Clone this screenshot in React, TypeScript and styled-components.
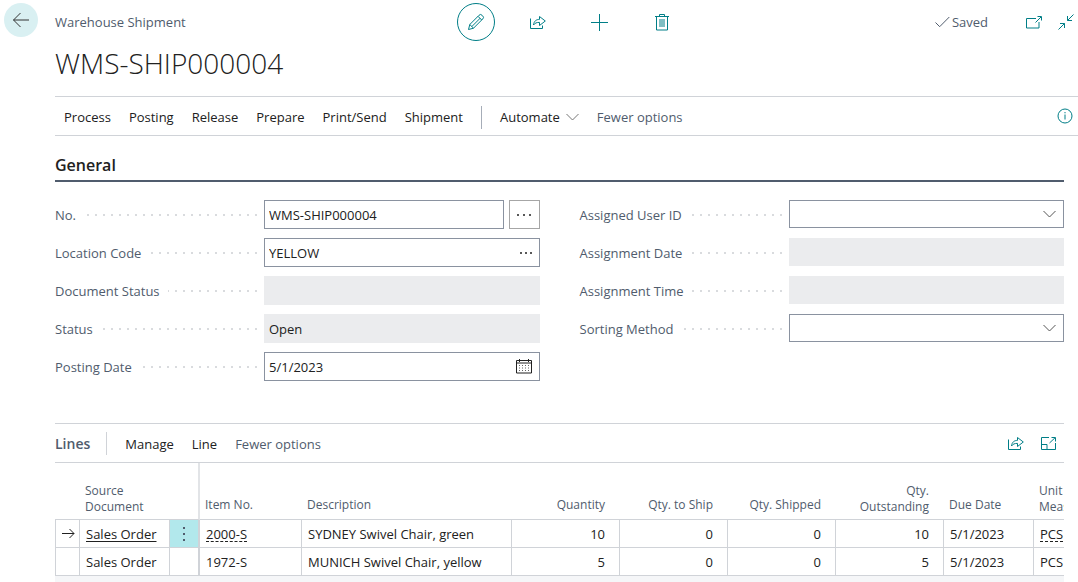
import React, { useState } from 'react';
import styled, { createGlobalStyle, css } from 'styled-components';

const teal = '#007e87';
const ink = '#212121';
const slate = '#505c6d';
const rule = '#d0d3d8';
const fieldBorder = '#8a92a0';

const GlobalStyle = createGlobalStyle`
  *, *::before, *::after { box-sizing: border-box; }
  html, body { margin: 0; background: #fff; }
  body, button, input, select {
    font-family: 'Segoe UI', 'Open Sans', 'Noto Sans', sans-serif;
    font-size: 13px;
    line-height: 20px;
    color: ${ink};
  }
  svg { display: block; fill: none; stroke: currentColor; }
`;

const Page = styled.div`
  overflow: hidden;
`;

const TopBar = styled.header`
  display: grid;
  grid-template-columns: 55px 1fr auto 1fr;
  align-items: center;
  height: 44px;
`;

const BareButton = styled.button`
  display: inline-flex;
  align-items: center;
  justify-content: center;
  padding: 0;
  border: 0;
  background: none;
  cursor: pointer;
`;

const BackButton = styled(BareButton)`
  align-self: start;
  width: 34px;
  height: 34px;
  margin: 3px 0 0 4px;
  border-radius: 50%;
  background: #d9f0f2;
  color: #333;
`;

const PageType = styled.span`
  color: ${slate};
`;

const ActionGroup = styled.div`
  display: flex;
  gap: 24px;
  padding-left: 4px;
`;

const RoundButton = styled(BareButton)<{ $active?: boolean }>`
  width: 38px;
  height: 38px;
  border: 1px solid ${p => (p.$active ? teal : 'transparent')};
  border-radius: 50%;
  color: ${teal};
`;

const StatusGroup = styled.div`
  display: flex;
  justify-content: flex-end;
  align-items: center;
  gap: 16px;
  padding-right: 4px;
`;

const Saved = styled.span`
  display: flex;
  align-items: center;
  gap: 2px;
  margin-right: 22px;
  color: ${slate};
`;

const IconButton = styled(BareButton)`
  color: ${teal};
`;

const Body = styled.main`
  padding-left: 55px;
`;

const Title = styled.h1`
  margin: 0;
  padding-bottom: 14px;
  font-size: 28px;
  line-height: 38px;
  font-weight: 300;
`;

const Menu = styled.nav`
  display: flex;
  align-items: center;
  height: 40px;
  padding: 0 5px 0 9px;
  border-top: 1px solid ${rule};
  border-bottom: 1px solid ${rule};
`;

const MenuItems = styled.div`
  display: flex;
  flex: 1;
  align-items: center;
  gap: 18px;
  padding-top: 2px;
`;

const MenuButton = styled(BareButton)<{ $muted?: boolean }>`
  gap: 6px;
  white-space: nowrap;
  color: ${p => (p.$muted ? slate : ink)};

  & > svg { color: #777; }
`;

const Divider = styled.span`
  width: 1px;
  height: 23px;
  background: #a6adb8;
`;

const Content = styled.div`
  padding-right: 14px;
`;

const SectionTitle = styled.h2`
  margin: 0;
  padding: 17px 0 3px;
  border-bottom: 2px solid ${slate};
  font-size: 16px;
  line-height: 24px;
  font-weight: 600;
`;

const Fields = styled.div`
  display: grid;
  grid-template-columns: 1fr 1fr;
  gap: 40px;
  padding: 18px 0 42px;
`;

const FieldRow = styled.div`
  display: flex;
  align-items: flex-start;
`;

const Column = styled.div<{ $controlHeight: number }>`
  display: grid;
  align-content: start;
  row-gap: 9px;

  ${FieldRow} > :not(label) { height: ${p => p.$controlHeight}px; }
`;

const Caption = styled.label`
  display: flex;
  flex: 0 0 209px;
  align-items: center;
  gap: 8px;
  height: 29px;
  padding-right: 7px;
  color: ${slate};
  white-space: nowrap;

  &::after {
    content: '';
    flex: 1;
    height: 2px;
    background: repeating-linear-gradient(to left, #d9dbde 0 2px, transparent 2px 8px);
  }
`;

const Box = styled.div<{ $disabled?: boolean }>`
  display: flex;
  flex: 1;
  align-items: center;
  min-width: 0;
  padding-right: 7px;
  border: 1px solid ${p => (p.$disabled ? '#ebecee' : fieldBorder)};
  background: ${p => (p.$disabled ? '#ebecee' : '#fff')};
`;

const bareControl = css`
  flex: 1;
  min-width: 0;
  height: 100%;
  padding: 0 4px;
  border: 0;
  outline: 0;
  background: none;
`;

const TextInput = styled.input`
  ${bareControl}
`;

const SelectBox = styled.div`
  display: grid;
  flex: 1;
  align-items: center;
  border: 1px solid ${fieldBorder};
  color: #555;

  & > * { grid-area: 1 / 1; }
  & > svg { justify-self: end; margin-right: 7px; pointer-events: none; }
`;

const Select = styled.select`
  ${bareControl}
  width: 100%;
  appearance: none;
`;

const AssistButton = styled(BareButton)`
  width: 31px;
  margin-left: 5px;
  border: 1px solid #a6a6a6;
`;

const LinesBar = styled.div`
  display: flex;
  align-items: center;
  height: 40px;
  padding-right: 8px;
  border-top: 1px solid ${rule};
  border-bottom: 1px solid ${rule};
`;

const LinesTitle = styled.h2`
  margin: 0 16px 0 0;
  padding-top: 2px;
  font-size: 14px;
  line-height: 20px;
  font-weight: 600;
  color: ${slate};
`;

const LinesDivider = styled(Divider)`
  background: ${rule};
`;

const LinesMenu = styled(MenuItems)`
  padding-left: 18px;
`;

const LinesIcons = styled.div`
  display: flex;
  gap: 17px;
`;

const TableClip = styled.div`
  overflow: hidden;
  padding-bottom: 7px;
  background: #f5f6f8;
`;

const Table = styled.table`
  width: 1069px;
  table-layout: fixed;
  border-collapse: separate;
  border-spacing: 0;
  background: #fff;
`;

const Head = styled.th<{ $right?: boolean; $frozen?: boolean; $wrapped?: boolean }>`
  height: 57px;
  padding: 0 15px 4px 5px;
  border-bottom: 1px solid ${rule};
  ${p => p.$frozen && 'border-right: 2px solid #e2e4e7;'}
  vertical-align: bottom;
  text-align: ${p => (p.$right ? 'right' : 'left')};
  font-size: 12px;
  line-height: ${p => (p.$wrapped ? 16 : 20)}px;
  font-weight: 400;
  color: ${slate};
`;

const Cell = styled.td<{ $right?: boolean; $frozen?: boolean; $first?: boolean; $active?: boolean }>`
  height: 28px;
  padding: ${p => (p.$right ? '0 14px 0 6px' : '0 6px')};
  border-right: ${p => (p.$frozen ? 2 : 1)}px solid ${rule};
  border-bottom: 1px solid ${rule};
  ${p => p.$first && `border-left: 1px solid ${rule};`}
  background: ${p => (p.$active ? '#b2e8ec' : '#fff')};
  text-align: ${p => (p.$right ? 'right' : 'left')};
  white-space: nowrap;
`;

const RowMenu = styled(BareButton)`
  display: flex;
  width: 100%;
`;

const CellLink = styled.a<{ $dashed?: boolean }>`
  color: ${ink};
  text-decoration: underline ${p => (p.$dashed ? 'dashed' : 'solid')} 1px;
  text-underline-offset: 2px;
`;

const BackArrow = () => (
  <svg width="18" height="16" viewBox="0 0 18 16"><path d="M17 8H1.500M8.500 1L1.500 8l7 7" /></svg>
);
const Pencil = () => (
  <svg width="18" height="18" viewBox="0 0 18 18">
    <path d="M1.500 16.500l1.300-5L12 2.300a2.100 2.100 0 0 1 3.100 0l.6.6a2.100 2.100 0 0 1 0 3.100L6.500 15.200zM2.800 11.500l3.700 3.700M11 3.300L14.700 7M13.200 5.200L4.800 13.600" />
  </svg>
);
const Share = () => (
  <svg width="16" height="16" viewBox="0 0 16 16">
    <path d="M.5 4.500V14.500H12.500V11.500M3.500 11c.5-4 2.800-5.600 6-5.600V2.500L15.300 7l-5.800 4.500V8.400C6.500 8.400 5 9 3.500 11z" />
  </svg>
);
const Plus = () => (
  <svg width="17" height="17" viewBox="0 0 17 17"><path d="M8.500 0v17M0 8.500h17" /></svg>
);
const Trash = () => (
  <svg width="14" height="17" viewBox="0 0 14 17">
    <path d="M0 2.500h14M4.500 2.500V.5h5v2M1.500 2.500v13.500h11V2.500" />
    <rect x="4" y="5" width="6" height="8" fill={teal} fillOpacity=".5" stroke="none" />
  </svg>
);
const Check = () => (
  <svg width="15" height="12" viewBox="0 0 15 12"><path d="M.5 6.500l4.200 4.200L14.300 1" /></svg>
);
const PopOut = () => (
  <svg width="16" height="13" viewBox="0 0 16 13">
    <path d="M10 2.500H.5v9.500h12.500V6M9.500 6.500l5.500-5.500M11.500.5h4v4" />
  </svg>
);
const Collapse = () => (
  <svg width="16" height="16" viewBox="0 0 16 16">
    <path d="M15.500.5L9.500 6.500M9.500 2v4.500H14M.5 15.500l6-6M2 9.500h4.500V14" />
  </svg>
);
const Expand = () => (
  <svg width="15" height="13" viewBox="0 0 15 13">
    <path d="M8 .5H.5v12h14V6M.5 7.500h5.500v5M8.500 6L14 .8M10.500.5h4v4" />
  </svg>
);
const Chevron = () => (
  <svg width="13" height="8" viewBox="0 0 13 8"><path d="M.5 1l6 6 6-6" /></svg>
);
const Info = () => (
  <svg width="16" height="16" viewBox="0 0 16 16">
    <circle cx="8" cy="8" r="7" /><path d="M8 6.500v5M8 4v1.300" />
  </svg>
);
const Dots = ({ wide }: { wide?: boolean }) => {
  const step = wide ? 6 : 5;
  return (
    <svg width={step * 2 + 2} height="2" viewBox={`0 0 ${step * 2 + 2} 2`}>
      {[0, 1, 2].map(i => <circle key={i} cx={i * step + 1} cy="1" r="1" fill={ink} stroke="none" />)}
    </svg>
  );
};
const Calendar = () => (
  <svg width="16" height="15" viewBox="0 0 16 15">
    <path d="M.5 1.500h15v12.500H.5zM.5 4h15M3.500 0v3M12.500 0v3" />
    <path d="M3 6.500h10.500M3 9h10.500M3 11.500h10.500" strokeDasharray="1 2" strokeOpacity=".7" />
  </svg>
);
const RowArrow = () => (
  <svg width="13" height="11" viewBox="0 0 13 11"><path d="M0 5.500h12M7.500 1L12 5.500 7.500 10" /></svg>
);
const VerticalDots = () => (
  <svg width="2" height="14" viewBox="0 0 2 14">
    {[0, 6, 12].map(y => <rect key={y} y={y} width="2" height="2" fill={slate} stroke="none" />)}
  </svg>
);

const menus = ['Process', 'Posting', 'Release', 'Prepare', 'Print/Send', 'Shipment'];

const columns = [25, 90, 30, 102, 210, 108, 108, 108, 108, 90, 90];

const lines = [
  { item: '2000-S', description: 'SYDNEY Swivel Chair, green', quantity: 10 },
  { item: '1972-S', description: 'MUNICH Swivel Chair, yellow', quantity: 5 },
];

export default function App() {
  const [no, setNo] = useState('WMS-SHIP000004');
  const [location, setLocation] = useState('YELLOW');
  const [date, setDate] = useState('5/1/2023');

  return (
    <Page>
      <GlobalStyle />
      <TopBar>
        <BackButton aria-label="Back"><BackArrow /></BackButton>
        <PageType>Warehouse Shipment</PageType>
        <ActionGroup>
          <RoundButton $active aria-label="Edit"><Pencil /></RoundButton>
          <RoundButton aria-label="Share"><Share /></RoundButton>
          <RoundButton aria-label="New"><Plus /></RoundButton>
          <RoundButton aria-label="Delete"><Trash /></RoundButton>
        </ActionGroup>
        <StatusGroup>
          <Saved><Check />Saved</Saved>
          <IconButton aria-label="Open in new window"><PopOut /></IconButton>
          <IconButton aria-label="Collapse page"><Collapse /></IconButton>
        </StatusGroup>
      </TopBar>

      <Body>
        <Title>WMS-SHIP000004</Title>
        <Menu>
          <MenuItems>
            {menus.map(m => <MenuButton key={m}>{m}</MenuButton>)}
            <Divider />
            <MenuButton>Automate <Chevron /></MenuButton>
            <MenuButton $muted>Fewer options</MenuButton>
          </MenuItems>
          <IconButton aria-label="Details"><Info /></IconButton>
        </Menu>

        <Content>
          <SectionTitle>General</SectionTitle>
          <Fields>
            <Column $controlHeight={29}>
              <FieldRow>
                <Caption htmlFor="no">No.</Caption>
                <Box><TextInput id="no" value={no} onChange={e => setNo(e.target.value)} /></Box>
                <AssistButton aria-label="Select number series"><Dots wide /></AssistButton>
              </FieldRow>
              <FieldRow>
                <Caption htmlFor="location">Location Code</Caption>
                <Box>
                  <TextInput id="location" value={location} onChange={e => setLocation(e.target.value)} />
                  <BareButton aria-label="Look up location"><Dots /></BareButton>
                </Box>
              </FieldRow>
              <FieldRow>
                <Caption htmlFor="docstatus">Document Status</Caption>
                <Box $disabled><TextInput id="docstatus" readOnly value="" /></Box>
              </FieldRow>
              <FieldRow>
                <Caption htmlFor="status">Status</Caption>
                <Box $disabled><TextInput id="status" readOnly value="Open" /></Box>
              </FieldRow>
              <FieldRow>
                <Caption htmlFor="posting">Posting Date</Caption>
                <Box>
                  <TextInput id="posting" value={date} onChange={e => setDate(e.target.value)} />
                  <BareButton aria-label="Choose date"><Calendar /></BareButton>
                </Box>
              </FieldRow>
            </Column>
            <Column $controlHeight={28}>
              <FieldRow>
                <Caption htmlFor="user">Assigned User ID</Caption>
                <SelectBox><Select id="user"><option /></Select><Chevron /></SelectBox>
              </FieldRow>
              <FieldRow>
                <Caption htmlFor="adate">Assignment Date</Caption>
                <Box $disabled><TextInput id="adate" readOnly value="" /></Box>
              </FieldRow>
              <FieldRow>
                <Caption htmlFor="atime">Assignment Time</Caption>
                <Box $disabled><TextInput id="atime" readOnly value="" /></Box>
              </FieldRow>
              <FieldRow>
                <Caption htmlFor="sorting">Sorting Method</Caption>
                <SelectBox><Select id="sorting"><option /></Select><Chevron /></SelectBox>
              </FieldRow>
            </Column>
          </Fields>

          <LinesBar>
            <LinesTitle>Lines</LinesTitle>
            <LinesDivider />
            <LinesMenu>
              <MenuButton>Manage</MenuButton>
              <MenuButton>Line</MenuButton>
              <MenuButton $muted>Fewer options</MenuButton>
            </LinesMenu>
            <LinesIcons>
              <IconButton aria-label="Share lines"><Share /></IconButton>
              <IconButton aria-label="Expand lines"><Expand /></IconButton>
            </LinesIcons>
          </LinesBar>

          <TableClip>
            <Table>
              <colgroup>
                {columns.map((w, i) => <col key={i} width={w} />)}
              </colgroup>
              <thead>
                <tr>
                  <Head />
                  <Head $wrapped>Source Document</Head>
                  <Head $frozen />
                  <Head>Item No.</Head>
                  <Head>Description</Head>
                  <Head $right>Quantity</Head>
                  <Head $right>Qty. to Ship</Head>
                  <Head $right>Qty. Shipped</Head>
                  <Head $right $wrapped>Qty. Outstanding</Head>
                  <Head>Due Date</Head>
                  <Head $wrapped>Unit of Measure</Head>
                </tr>
              </thead>
              <tbody>
                {lines.map((line, i) => {
                  const current = i === 0;
                  return (
                    <tr key={line.item}>
                      <Cell $first>{current && <RowArrow />}</Cell>
                      <Cell>{current ? <CellLink href="#order">Sales Order</CellLink> : 'Sales Order'}</Cell>
                      <Cell $frozen $active={current}>
                        {current && <RowMenu aria-label="Row options"><VerticalDots /></RowMenu>}
                      </Cell>
                      <Cell>{current ? <CellLink $dashed href="#item">{line.item}</CellLink> : line.item}</Cell>
                      <Cell>{line.description}</Cell>
                      <Cell $right>{line.quantity}</Cell>
                      <Cell $right>0</Cell>
                      <Cell $right>0</Cell>
                      <Cell $right>{line.quantity}</Cell>
                      <Cell>5/1/2023</Cell>
                      <Cell>{current ? <CellLink $dashed href="#unit">PCS</CellLink> : 'PCS'}</Cell>
                    </tr>
                  );
                })}
              </tbody>
            </Table>
          </TableClip>
        </Content>
      </Body>
    </Page>
  );
}
